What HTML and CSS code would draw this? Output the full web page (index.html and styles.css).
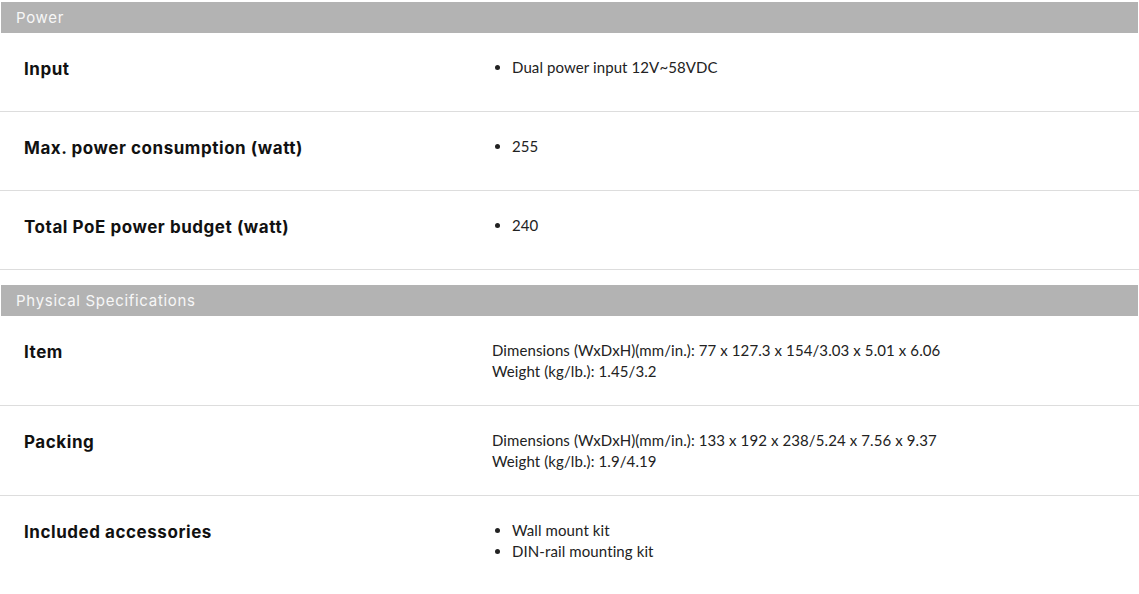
FILE: index.html
```html
<!DOCTYPE html>
<html lang="en">
<head>
    <meta charset="UTF-8">
    <meta name="viewport" content="width=device-width, initial-scale=1.0">
    <title>Specifications</title>
    <link rel="stylesheet" href="styles.css">
</head>
<body>
    <div class="specs">
        <div class="spec-group">
            <div class="group-title">Power</div>
            <div class="spec-row">
                <div class="spec-label">Input</div>
                <div class="spec-value">
                    <ul>
                        <li>Dual power input 12V~58VDC</li>
                    </ul>
                </div>
            </div>
            <div class="spec-row">
                <div class="spec-label">Max. power consumption (watt)</div>
                <div class="spec-value">
                    <ul>
                        <li>255</li>
                    </ul>
                </div>
            </div>
            <div class="spec-row">
                <div class="spec-label">Total PoE power budget (watt)</div>
                <div class="spec-value">
                    <ul>
                        <li>240</li>
                    </ul>
                </div>
            </div>
        </div>

        <div class="spec-group">
            <div class="group-title">Physical Specifications</div>
            <div class="spec-row">
                <div class="spec-label">Item</div>
                <div class="spec-value">
                    <p>Dimensions (WxDxH)(mm/in.): 77 x 127.3 x 154/3.03 x 5.01 x 6.06</p>
                    <p>Weight (kg/lb.): 1.45/3.2</p>
                </div>
            </div>
            <div class="spec-row">
                <div class="spec-label">Packing</div>
                <div class="spec-value">
                    <p>Dimensions (WxDxH)(mm/in.): 133 x 192 x 238/5.24 x 7.56 x 9.37</p>
                    <p>Weight (kg/lb.): 1.9/4.19</p>
                </div>
            </div>
            <div class="spec-row">
                <div class="spec-label">Included accessories</div>
                <div class="spec-value">
                    <ul>
                        <li>Wall mount kit</li>
                        <li>DIN-rail mounting kit</li>
                    </ul>
                </div>
            </div>
        </div>
    </div>
</body>
</html>
```

FILE: styles.css
```css
body {
    margin: 0;
    font-family: Lato, "Noto Sans", sans-serif;
    color: #1a1a1a;
    background: #ffffff;
}

.specs {
    padding-top: 2px;
}

.spec-group + .spec-group {
    margin-top: 15px;
}

.group-title {
    margin: 0 1px;
    height: 31px;
    line-height: 31px;
    padding-left: 15px;
    background: #b3b3b3;
    color: #f7f7f7;
    font-family: Inter, "Noto Sans", sans-serif;
    font-size: 15px;
    letter-spacing: 0.7px;
}

.spec-row {
    display: flex;
    padding: 24px 0 23px;
    border-bottom: 1px solid #dddddd;
}

.spec-label {
    width: 468px;
    padding-left: 24px;
    font-family: Inter, "Noto Sans", sans-serif;
    font-size: 17px;
    font-weight: 700;
    line-height: 24px;
    letter-spacing: 0.55px;
    color: #111111;
}

.spec-value {
    flex: 1;
    font-size: 15px;
    line-height: 21px;
    letter-spacing: 0.1px;
    color: #222222;
}

.spec-value p {
    margin: 0;
}

.spec-value ul {
    margin: 0 0 10px;
    padding-left: 20px;
}
```
